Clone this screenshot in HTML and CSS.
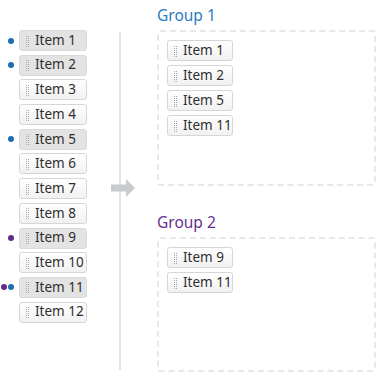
FILE: index.html
```html
<!DOCTYPE html>
<html>
<head>
<meta charset="utf-8">
<link rel="stylesheet" href="styles.css">
</head>
<body>
<div class="page">
  <div class="source">
    <div class="row"><span class="dots"><i class="dot blue"></i></span><div class="item sel"><span class="grip"></span>Item 1</div></div>
    <div class="row"><span class="dots"><i class="dot blue"></i></span><div class="item sel"><span class="grip"></span>Item 2</div></div>
    <div class="row"><span class="dots"></span><div class="item"><span class="grip"></span>Item 3</div></div>
    <div class="row"><span class="dots"></span><div class="item"><span class="grip"></span>Item 4</div></div>
    <div class="row"><span class="dots"><i class="dot blue"></i></span><div class="item sel"><span class="grip"></span>Item 5</div></div>
    <div class="row"><span class="dots"></span><div class="item"><span class="grip"></span>Item 6</div></div>
    <div class="row"><span class="dots"></span><div class="item"><span class="grip"></span>Item 7</div></div>
    <div class="row"><span class="dots"></span><div class="item"><span class="grip"></span>Item 8</div></div>
    <div class="row"><span class="dots"><i class="dot purple"></i></span><div class="item sel"><span class="grip"></span>Item 9</div></div>
    <div class="row"><span class="dots"></span><div class="item"><span class="grip"></span>Item 10</div></div>
    <div class="row"><span class="dots"><i class="dot purple"></i><i class="dot blue"></i></span><div class="item sel"><span class="grip"></span>Item 11</div></div>
    <div class="row"><span class="dots"></span><div class="item"><span class="grip"></span>Item 12</div></div>
  </div>
  <div class="divider">
    <div class="line"></div>
    <svg class="arrow" width="24" height="18" viewBox="0 0 24 18"><path d="M0 5.5H15V0L24 9L15 18V12.5H0Z" fill="#c9cccf"/></svg>
  </div>
  <div class="groups">
    <div class="group">
      <h2 class="title g1">Group 1</h2>
      <div class="box b1">
        <div class="item"><span class="grip"></span>Item 1</div>
        <div class="item"><span class="grip"></span>Item 2</div>
        <div class="item"><span class="grip"></span>Item 5</div>
        <div class="item"><span class="grip"></span>Item 11</div>
      </div>
    </div>
    <div class="group">
      <h2 class="title g2">Group 2</h2>
      <div class="box b2">
        <div class="item"><span class="grip"></span>Item 9</div>
        <div class="item"><span class="grip"></span>Item 11</div>
      </div>
    </div>
  </div>
</div>
</body>
</html>
```
FILE: styles.css
```css
* { box-sizing: border-box; }
html, body { margin: 0; padding: 0; background: #fff; }
body { font-family: "Noto Sans", "Open Sans", sans-serif; color: #333; }
.page { display: flex; width: 381px; height: 376px; }

.source { width: 110px; padding-top: 30px; display: flex; flex-direction: column; gap: 3.7px; }
.row { display: flex; align-items: center; }
.dots { width: 19px; display: flex; justify-content: flex-end; align-items: center; gap: 1px; padding-right: 5px; }
.dot { display: block; width: 6px; height: 6px; border-radius: 50%; }
.dot.blue { background: #1f6db3; }
.dot.purple { background: #5f2c8c; }

.item {
  width: 68px; height: 21px;
  display: flex; align-items: center;
  border: 1px solid #d6d6d6; border-radius: 3px;
  background: linear-gradient(#ffffff, #f1f1f1);
  font-size: 13.5px; line-height: 1; color: #2e2e2e;
  padding-left: 6px;
}
.item.sel { background: #e3e3e3; border-color: #dadada; }
.grip { position: relative; width: 4px; height: 11px; margin-right: 5px; margin-top: 1px; }
.grip::before {
  content: ""; position: absolute; left: 0; top: 0; width: 1px; height: 1px; background: #a9a9a9;
  box-shadow: 2px 0 #a9a9a9, 0 2px #a9a9a9, 2px 2px #a9a9a9, 0 4px #a9a9a9, 2px 4px #a9a9a9,
              0 6px #a9a9a9, 2px 6px #a9a9a9, 0 8px #a9a9a9, 2px 8px #a9a9a9, 0 10px #a9a9a9, 2px 10px #a9a9a9;
}

.divider { width: 47px; position: relative; display: flex; }
.line { width: 2px; background: #e2e2e2; margin: 32px 0 6px 9px; }
.arrow { position: absolute; left: 1px; top: 179px; }

.groups { flex: 1; display: flex; flex-direction: column; padding-right: 5px; }
.title { margin: 0; font-weight: normal; font-size: 15.5px; height: 30px; padding-top: 5px; line-height: 20px; }
.title.g1 { color: #2a7bc2; }
.title.g2 { color: #67308f; }
.group + .group .title { margin-top: 22px; padding-top: 4px; height: 29px; }
.box {
  border: 2px dashed #e8e8e8; border-radius: 3px;
  padding: 8px 8px; display: flex; flex-direction: column; gap: 4px;
}
.box .item { width: 66px; }
.b1 { height: 156px; }
.b2 { height: 135px; }
```
